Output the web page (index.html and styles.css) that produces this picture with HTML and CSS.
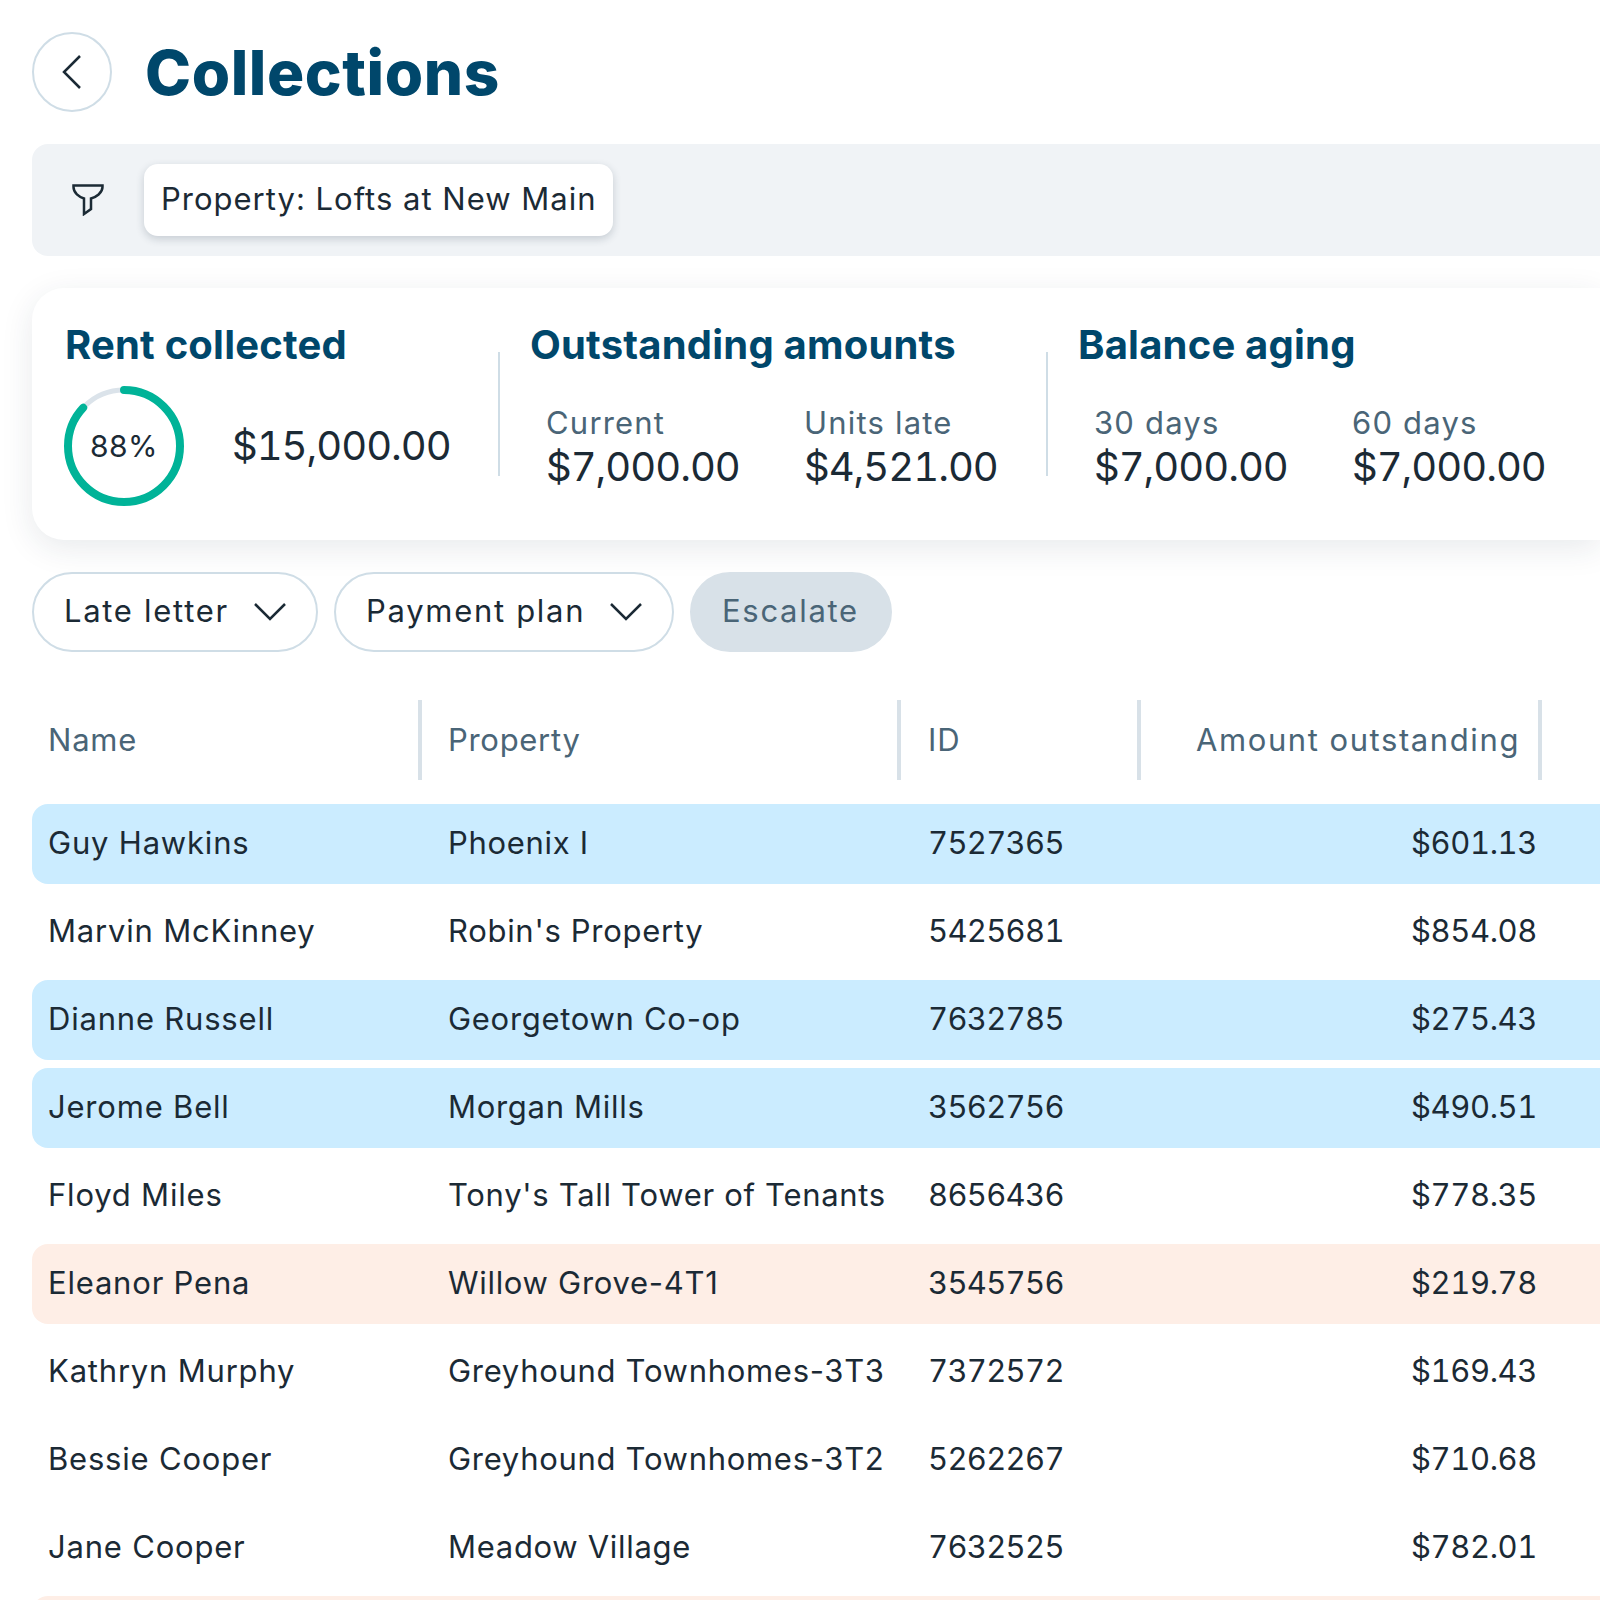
FILE: index.html

```html
<!DOCTYPE html>
<html lang="en">
<head>
  <meta charset="UTF-8" />
  <title>Collections</title>
  <link rel="stylesheet" href="styles.css">
</head>
<body>

<div class="page">
  <div class="title-row">
    <button class="back-btn">
      <svg width="24" height="36" viewBox="0 0 24 36"><path d="M20 2 L4 18 L20 34" /></svg>
    </button>
    <h1>Collections</h1>
  </div>

  <div class="filter-bar">
    <svg class="filter-icon" width="32" height="32" viewBox="0 0 32 32"><path d="M1.5 1.5 H30.5 V3 C30.5 9 24 13 19 14.5 V25 L12 30 V14.5 C7 13 1.5 9 1.5 3 Z" /></svg>
    <div class="chip">Property: Lofts at New Main</div>
  </div>

  <div class="summary">
    <section class="rent">
      <h2>Rent collected</h2>
      <div class="rent-body">
        <div class="ring">
          <svg width="120" height="120" viewBox="0 0 120 120">
            <circle class="ring-track" cx="60" cy="60" r="56" />
            <circle class="ring-value" cx="60" cy="60" r="56" pathLength="100" />
          </svg>
          <span>88%</span>
        </div>
        <div class="amount">$15,000.00</div>
      </div>
    </section>
    <section class="group">
      <h2>Outstanding amounts</h2>
      <div class="stats">
        <div class="stat"><div class="label">Current</div><div class="amount">$7,000.00</div></div>
        <div class="stat"><div class="label">Units late</div><div class="amount">$4,521.00</div></div>
      </div>
    </section>
    <section class="group">
      <h2>Balance aging</h2>
      <div class="stats">
        <div class="stat"><div class="label">30 days</div><div class="amount">$7,000.00</div></div>
        <div class="stat"><div class="label">60 days</div><div class="amount">$7,000.00</div></div>
      </div>
    </section>
  </div>

  <div class="actions">
    <button class="pill late">Late letter
      <svg width="32" height="20" viewBox="0 0 32 20"><path d="M1 2 L16 17 L31 2" /></svg>
    </button>
    <button class="pill plan">Payment plan
      <svg width="32" height="20" viewBox="0 0 32 20"><path d="M1 2 L16 17 L31 2" /></svg>
    </button>
    <button class="pill escalate">Escalate</button>
  </div>

  <div class="table">
    <div class="row head">
      <div class="cell">Name</div>
      <div class="cell">Property</div>
      <div class="cell">ID</div>
      <div class="cell money">Amount outstanding</div>
    </div>
    <div class="row blue"><div class="cell">Guy Hawkins</div><div class="cell">Phoenix I</div><div class="cell">7527365</div><div class="cell money">$601.13</div></div>
    <div class="row"><div class="cell">Marvin McKinney</div><div class="cell">Robin's Property</div><div class="cell">5425681</div><div class="cell money">$854.08</div></div>
    <div class="row blue"><div class="cell">Dianne Russell</div><div class="cell">Georgetown Co-op</div><div class="cell">7632785</div><div class="cell money">$275.43</div></div>
    <div class="row blue"><div class="cell">Jerome Bell</div><div class="cell">Morgan Mills</div><div class="cell">3562756</div><div class="cell money">$490.51</div></div>
    <div class="row"><div class="cell">Floyd Miles</div><div class="cell">Tony's Tall Tower of Tenants</div><div class="cell">8656436</div><div class="cell money">$778.35</div></div>
    <div class="row pink"><div class="cell">Eleanor Pena</div><div class="cell">Willow Grove-4T1</div><div class="cell">3545756</div><div class="cell money">$219.78</div></div>
    <div class="row"><div class="cell">Kathryn Murphy</div><div class="cell">Greyhound Townhomes-3T3</div><div class="cell">7372572</div><div class="cell money">$169.43</div></div>
    <div class="row"><div class="cell">Bessie Cooper</div><div class="cell">Greyhound Townhomes-3T2</div><div class="cell">5262267</div><div class="cell money">$710.68</div></div>
    <div class="row"><div class="cell">Jane Cooper</div><div class="cell">Meadow Village</div><div class="cell">7632525</div><div class="cell money">$782.01</div></div>
    <div class="row pink"></div>
  </div>
</div>

</body>
</html>
```

FILE: styles.css

```css
html, body {
  margin: 0;
  height: 1600px;
  overflow: hidden;
  background: white;
}
body {
  font-family: Inter, "Noto Sans", sans-serif;
  color: #1b2a35;
}
.page {
  width: 1600px;
  height: 1600px;
  overflow: hidden;
  padding: 32px 0 0 32px;
  box-sizing: border-box;
}
.title-row {
  display: flex;
  align-items: center;
  gap: 33px;
  height: 80px;
}
.back-btn {
  width: 80px;
  height: 80px;
  border-radius: 50%;
  border: 2px solid #cfdde6;
  background: white;
  display: flex;
  align-items: center;
  justify-content: center;
  padding: 0;
}
.back-btn path, .pill path {
  fill: none;
  stroke: #1b2a35;
  stroke-width: 2.5;
}
h1 {
  margin: 0;
  font-size: 62px;
  font-weight: 800;
  letter-spacing: 0.6px;
  color: #00476b;
}
.filter-bar {
  margin-top: 32px;
  height: 112px;
  background: #f0f3f6;
  border-radius: 16px 0 0 16px;
  display: flex;
  align-items: center;
  padding-left: 40px;
  gap: 40px;
}
.filter-icon path {
  fill: none;
  stroke: #1b2a35;
  stroke-width: 2.5;
}
.chip {
  background: white;
  height: 72px;
  line-height: 70px;
  padding: 0 17px;
  border-radius: 14px;
  font-size: 31px;
  letter-spacing: 1px;
  box-shadow: 0 3px 8px rgba(30, 50, 70, 0.2);
}
.summary {
  margin-top: 32px;
  height: 252px;
  background: white;
  border-radius: 32px 0 0 32px;
  box-shadow: 0 8px 32px rgba(30, 50, 70, 0.1);
  display: flex;
}
.summary section {
  padding-top: 33px;
  box-sizing: border-box;
}
.summary h2 {
  margin: 0;
  font-size: 40px;
  line-height: 48px;
  font-weight: 700;
  letter-spacing: 0.2px;
  color: #00476b;
}
.rent {
  width: 466px;
  padding-left: 33px;
}
.rent-body {
  display: flex;
  align-items: center;
  gap: 48px;
  margin: 17px 0 0 -1px;
}
.ring {
  width: 120px;
  height: 120px;
  position: relative;
  display: flex;
  align-items: center;
  justify-content: center;
  font-size: 30px;
  letter-spacing: 0.5px;
}
.ring svg {
  position: absolute;
  top: 0;
  left: 0;
  transform: rotate(-90deg);
}
.ring circle {
  fill: none;
}
.ring-track {
  stroke: #dbe3ea;
  stroke-width: 5;
}
.ring-value {
  stroke: #00b398;
  stroke-width: 8;
  stroke-linecap: round;
  stroke-dasharray: 87 100;
}
.amount {
  font-size: 40px;
  line-height: 48px;
  letter-spacing: -1px;
  font-variant-numeric: tabular-nums;
}
.group {
  width: 548px;
  position: relative;
  padding-left: 32px;
  flex: none;
}
.group::before {
  content: "";
  position: absolute;
  left: 0;
  top: 64px;
  height: 124px;
  width: 2px;
  background: #cfdde6;
}
.stats {
  display: flex;
  padding-left: 16px;
  margin-top: 33px;
}
.stat {
  width: 258px;
  flex: none;
}
.label {
  font-size: 31px;
  line-height: 41px;
  letter-spacing: 1.2px;
  color: #4a6577;
}
.actions {
  margin-top: 32px;
  display: flex;
  gap: 16px;
}
.pill {
  height: 80px;
  border-radius: 40px;
  border: 2px solid #cfdde6;
  background: white;
  font-family: inherit;
  font-size: 31px;
  letter-spacing: 1.7px;
  color: #1b2a35;
  display: flex;
  align-items: center;
  justify-content: space-between;
  padding: 0 30px 3px;
}
.pill svg {
  margin-top: 3px;
}
.late { width: 286px; }
.plan { width: 340px; }
.escalate {
  width: 202px;
  background: #d8e1e8;
  border-color: #d8e1e8;
  color: #4a6577;
}
.table {
  margin-top: 48px;
  display: flex;
  flex-direction: column;
  gap: 8px;
}
.row {
  display: grid;
  grid-template-columns: 400px 480px 240px 385px;
  height: 80px;
  flex: none;
  align-items: center;
  border-radius: 16px 0 0 16px;
  font-size: 31px;
  letter-spacing: 0.8px;
}
.cell {
  padding: 0 0 4px 16px;
  white-space: nowrap;
}
.cell:nth-child(2) {
  letter-spacing: 0.7px;
}
.cell:nth-child(3) {
  letter-spacing: -0.7px;
  font-variant-numeric: tabular-nums;
}
.money {
  text-align: right;
  padding-left: 0;
  letter-spacing: -0.4px;
  font-variant-numeric: tabular-nums;
}
.blue { background: #cbecff; }
.pink { background: #feeee6; }
.head {
  margin-bottom: 16px;
  color: #4a6577;
  align-items: stretch;
  grid-template-columns: 390px 11px 468px 12px 228px 12px 389px;
  border-radius: 0;
}
.head .cell {
  padding-bottom: 0;
  line-height: 80px;
  border-right: 4px solid #d8e1e8;
  box-sizing: border-box;
}
.head .cell:nth-child(1) { grid-column: 1; }
.head .cell:nth-child(2) { grid-column: 3; padding-left: 15px; }
.head .cell:nth-child(3) { grid-column: 5; padding-left: 15px; letter-spacing: 0.8px; }
.head .cell:nth-child(4) {
  grid-column: 7;
  padding-right: 18px;
  letter-spacing: 1.6px;
}
```
